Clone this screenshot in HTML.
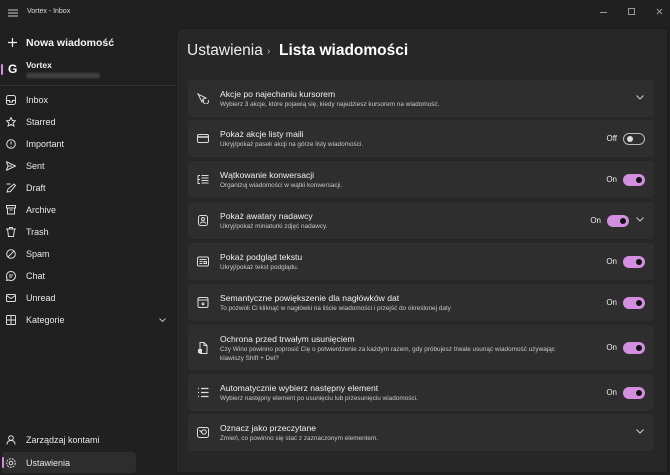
<!DOCTYPE html>
<html><head><meta charset="utf-8"><style>
*{margin:0;padding:0;box-sizing:border-box}
body{width:670px;height:475px;background:#202020;font-family:"Segoe UI","Liberation Sans",sans-serif;color:#fff;position:relative;overflow:hidden}
.t{position:absolute;white-space:nowrap}
.nav{position:absolute;left:0;width:176px;height:22px;font-size:9px;color:#e8e8e8}
.nav svg{position:absolute;left:6px;top:6px}
.nav span{position:absolute;left:26px;top:6px}
.panel{position:absolute;left:176px;top:28px;width:492px;height:445px;background:#272727;border-radius:7px 0 0 0;border:1px solid #1c1c1c}
.card{position:absolute;left:188px;width:466px;height:37px;background:#2e2e2e;border-radius:4px}
.card .h{position:absolute;left:32px;top:9px;font-size:8.6px;color:#f0f0f0;white-space:nowrap}
.card .s{position:absolute;left:32px;top:21px;font-size:6.4px;color:#c8c8c8;white-space:nowrap}
.card svg.ic{position:absolute;left:9px;top:13px}
.tg{position:absolute;right:9px;top:13px;width:22px;height:12px;border-radius:6px;background:#d38ee0}
.tg::after{content:"";position:absolute;right:3px;top:3px;width:6px;height:6px;border-radius:3px;background:#111}
.tg.off{background:transparent;border:1px solid #bbb}
.tg.off::after{left:3px;right:auto;top:2px;background:#ddd}
.lab{position:absolute;right:37px;top:14px;font-size:8px;color:#eee}
.ch{position:absolute;right:10px;top:15px}
</style></head><body>
<svg class="t" style="left:8px;top:9px" width="10" height="8"><path d="M0 1h10M0 4h10M0 7h10" stroke="#ccc" stroke-width="1"/></svg>
<div class="t" style="left:27px;top:8px;font-size:7px;color:#ddd">Vortex - Inbox</div>
<svg class="t" style="left:600px;top:8px" width="64" height="8"><path d="M0 4.5h7" stroke="#999"/><rect x="28.5" y="0.5" width="6" height="6" fill="none" stroke="#999"/><path d="M57 1l5 5M62 1l-5 5" stroke="#999"/></svg>
<svg class="t" style="left:8px;top:38px" width="9" height="9"><path d="M4.5 0v9M0 4.5h9" stroke="#eee" stroke-width="1.2"/></svg>
<div class="t" style="left:26px;top:37px;font-size:10.5px;font-weight:bold;color:#f4f4f4">Nowa wiadomość</div>
<div class="t" style="left:1px;top:64px;width:2px;height:11px;background:#d38ee0;border-radius:1px"></div>
<div class="t" style="left:8px;top:62px;font-size:12px;font-weight:bold;color:#fff">G</div>
<div class="t" style="left:26px;top:60px;font-size:8.5px;font-weight:bold;color:#eee">Vortex</div>
<div class="t" style="left:26px;top:73px;width:74px;height:5px;background:#444;border-radius:3px;filter:blur(1px)"></div>
<div class="t" style="left:0;top:85px;width:176px;height:1px;background:#333"></div>
<div class="nav" style="top:89px"><svg width="10" height="10"><rect x="0.5" y="0.5" width="9" height="9" rx="2" fill="none" stroke="#ddd"/><path d="M0.5 5.5h3v1.5h3v-1.5h3" fill="none" stroke="#ddd"/></svg><span>Inbox</span></div>
<div class="nav" style="top:111px"><svg width="10" height="10"><path d="M5 .5l1.4 3 3.1.3-2.4 2.1.8 3.1L5 7.4 2.1 9l.8-3.1L.5 3.8l3.1-.3z" fill="none" stroke="#ddd"/></svg><span>Starred</span></div>
<div class="nav" style="top:133px"><svg width="10" height="10"><circle cx="5" cy="5" r="4.3" fill="none" stroke="#ddd"/><path d="M5 2.5v3M5 7v.8" stroke="#ddd"/></svg><span>Important</span></div>
<div class="nav" style="top:155px"><svg width="10" height="10"><path d="M.5 .8l9 4.2-9 4.2 1.5-4.2z M2 5h4" fill="none" stroke="#ddd"/></svg><span>Sent</span></div>
<div class="nav" style="top:177px"><svg width="10" height="10"><path d="M1 9l1-3 6-5 1.5 1.5-5 6z M.5 1h4" fill="none" stroke="#ddd"/></svg><span>Draft</span></div>
<div class="nav" style="top:199px"><svg width="10" height="10"><rect x=".5" y=".5" width="9" height="2.5" fill="none" stroke="#ddd"/><path d="M1.5 3v6h7V3M3.5 5h3" fill="none" stroke="#ddd"/></svg><span>Archive</span></div>
<div class="nav" style="top:221px"><svg width="10" height="10"><path d="M0 2h10M3.5 2V.5h3V2M1.5 2l1 7.5h5l1-7.5" fill="none" stroke="#ddd"/></svg><span>Trash</span></div>
<div class="nav" style="top:243px"><svg width="10" height="10"><circle cx="5" cy="5" r="4.3" fill="none" stroke="#ddd"/><path d="M2 8l6-6" stroke="#ddd"/></svg><span>Spam</span></div>
<div class="nav" style="top:265px"><svg width="10" height="10"><path d="M5 .5a4.5 4.5 0 1 1-2.3 8.4L.5 9.5l.6-2.2A4.5 4.5 0 0 1 5 .5zM3 4h4M3 6h3" fill="none" stroke="#ddd"/></svg><span>Chat</span></div>
<div class="nav" style="top:287px"><svg width="10" height="10"><rect x=".5" y="1.5" width="9" height="7" rx="1" fill="none" stroke="#ddd"/><path d="M.5 2.5l4.5 3 4.5-3" fill="none" stroke="#ddd"/></svg><span>Unread</span></div>
<div class="nav" style="top:309px"><svg width="10" height="10"><rect x=".5" y=".5" width="9" height="9" rx="1" fill="none" stroke="#ddd"/><path d="M5 .5v9M.5 5h9" stroke="#ddd"/></svg><span>Kategorie</span></div>
<svg class="t" style="left:159px;top:318px" width="7" height="5"><path d="M.5 .5l3 3 3-3" fill="none" stroke="#bbb"/></svg>
<div class="nav" style="top:429px"><svg width="10" height="10"><circle cx="5" cy="3" r="2.3" fill="none" stroke="#ddd"/><path d="M1 9.5c0-3 2-4 4-4s4 1 4 4" fill="none" stroke="#ddd"/></svg><span>Zarządzaj kontami</span></div>
<div class="t" style="left:2px;top:452px;width:134px;height:21px;background:#2d2d2d;border-radius:4px"></div>
<div class="t" style="left:2px;top:457px;width:2px;height:11px;background:#d38ee0;border-radius:1px"></div>
<div class="nav" style="top:452px"><svg width="10" height="10"><circle cx="5" cy="5" r="4.3" fill="none" stroke="#ddd" stroke-dasharray="2 1"/><circle cx="5" cy="5" r="1.8" fill="none" stroke="#ddd"/></svg><span>Ustawienia</span></div>
<div class="panel"></div>
<div class="t" style="left:187px;top:42px;font-size:15.5px;color:#eee">Ustawienia</div>
<div class="t" style="left:267px;top:46px;font-size:10px;color:#bbb">›</div>
<div class="t" style="left:279px;top:42px;font-size:15.5px;font-weight:bold;color:#fff">Lista wiadomości</div>

<div class="card" style="top:80px"><svg class="ic" width="12" height="11"><path d="M1 1l4 8 1-3 3-1z M7 7a2.5 2.5 0 1 0 4 0" fill="none" stroke="#ddd"/></svg><div class="h">Akcje po najechaniu kursorem</div><div class="s">Wybierz 3 akcje, które pojawią się, kiedy najedziesz kursorem na wiadomość.</div><svg class="ch" width="8" height="5"><path d="M.5 .5l3.5 3.5 3.5-3.5" fill="none" stroke="#ccc"/></svg></div>
<div class="card" style="top:120px"><svg class="ic" width="12" height="11"><rect x=".5" y="1.5" width="11" height="8" rx="1.5" fill="none" stroke="#ddd"/><path d="M.5 4h11" stroke="#ddd" stroke-width="1.5"/></svg><div class="h">Pokaż akcje listy maili</div><div class="s">Ukryj/pokaż pasek akcji na górze listy wiadomości.</div><div class="lab">Off</div><div class="tg off"></div></div>
<div class="card" style="top:161px"><svg class="ic" width="12" height="11"><path d="M1 1.5h2M1 1.5v4h2M1 5.5v4h2M4.5 1.5h7M4.5 4h7M4.5 6.5h7M4.5 9h7" fill="none" stroke="#ddd"/></svg><div class="h">Wątkowanie konwersacji</div><div class="s">Organizuj wiadomości w wątki konwersacji.</div><div class="lab">On</div><div class="tg"></div></div>
<div class="card" style="top:202px"><svg class="ic" width="12" height="11"><rect x="1.5" y=".5" width="9" height="10" rx="2" fill="none" stroke="#ddd"/><circle cx="6" cy="4" r="1.5" fill="none" stroke="#ddd"/><path d="M3.5 8.5c0-2 5-2 5 0" fill="none" stroke="#ddd"/></svg><div class="h">Pokaż awatary nadawcy</div><div class="s">Ukryj/pokaż miniaturki zdjęć nadawcy.</div><div class="lab" style="right:53px">On</div><div class="tg" style="right:25px"></div><svg class="ch" width="8" height="5"><path d="M.5 .5l3.5 3.5 3.5-3.5" fill="none" stroke="#ccc"/></svg></div>
<div class="card" style="top:243px"><svg class="ic" width="12" height="11"><rect x=".5" y="1" width="11" height="9" rx="1.5" fill="none" stroke="#ddd"/><path d="M2.5 3.5h7M2.5 5.5h3M2.5 7.5h3M7 5.5h2.5v2H7z" fill="none" stroke="#ddd"/></svg><div class="h">Pokaż podgląd tekstu</div><div class="s">Ukryj/pokaż tekst podglądu.</div><div class="lab">On</div><div class="tg"></div></div>
<div class="card" style="top:284px"><svg class="ic" width="12" height="11"><rect x="1" y=".5" width="10" height="10" rx="1.5" fill="none" stroke="#ddd"/><path d="M1 3h10M6 5v3M4.5 6.5l1.5 1.5 1.5-1.5" fill="none" stroke="#ddd"/></svg><div class="h">Semantyczne powiększenie dla nagłówków dat</div><div class="s">To pozwoli Ci kliknąć w nagłówki na liście wiadomości i przejść do określonej daty</div><div class="lab">On</div><div class="tg"></div></div>
<div class="card" style="top:325px;height:45px"><svg class="ic" width="12" height="12" style="top:17px"><path d="M3 .5h4l3 3v8H3zM7 .5v3h3" fill="none" stroke="#ddd"/><rect x="1" y="7" width="4" height="4" fill="#ddd"/></svg><div class="h">Ochrona przed trwałym usunięciem</div><div class="s">Czy Wino powinno poprosić Cię o potwierdzenie za każdym razem, gdy próbujesz trwale usunąć wiadomość używając</div><div class="s" style="top:30px">klawiszy Shift + Del?</div><div class="lab" style="top:18px">On</div><div class="tg" style="top:17px"></div></div>
<div class="card" style="top:374px"><svg class="ic" width="12" height="11"><path d="M1 1.5h1M1 5.5h1M1 9.5h1M4 1.5h7.5M4 5.5h7.5M4 9.5h7.5" stroke="#ddd" stroke-width="1.2"/></svg><div class="h">Automatycznie wybierz następny element</div><div class="s">Wybierz następny element po usunięciu lub przesunięciu wiadomości.</div><div class="lab">On</div><div class="tg"></div></div>
<div class="card" style="top:414px"><svg class="ic" width="12" height="11"><rect x=".5" y=".5" width="11" height="10" rx="2" fill="none" stroke="#ddd"/><circle cx="7" cy="5" r="2.3" fill="none" stroke="#ddd"/><path d="M2.5 3l2.5 3" stroke="#ddd"/></svg><div class="h">Oznacz jako przeczytane</div><div class="s">Zmień, co powinno się stać z zaznaczonym elementem.</div><svg class="ch" width="8" height="5"><path d="M.5 .5l3.5 3.5 3.5-3.5" fill="none" stroke="#ccc"/></svg></div>
</body></html>
